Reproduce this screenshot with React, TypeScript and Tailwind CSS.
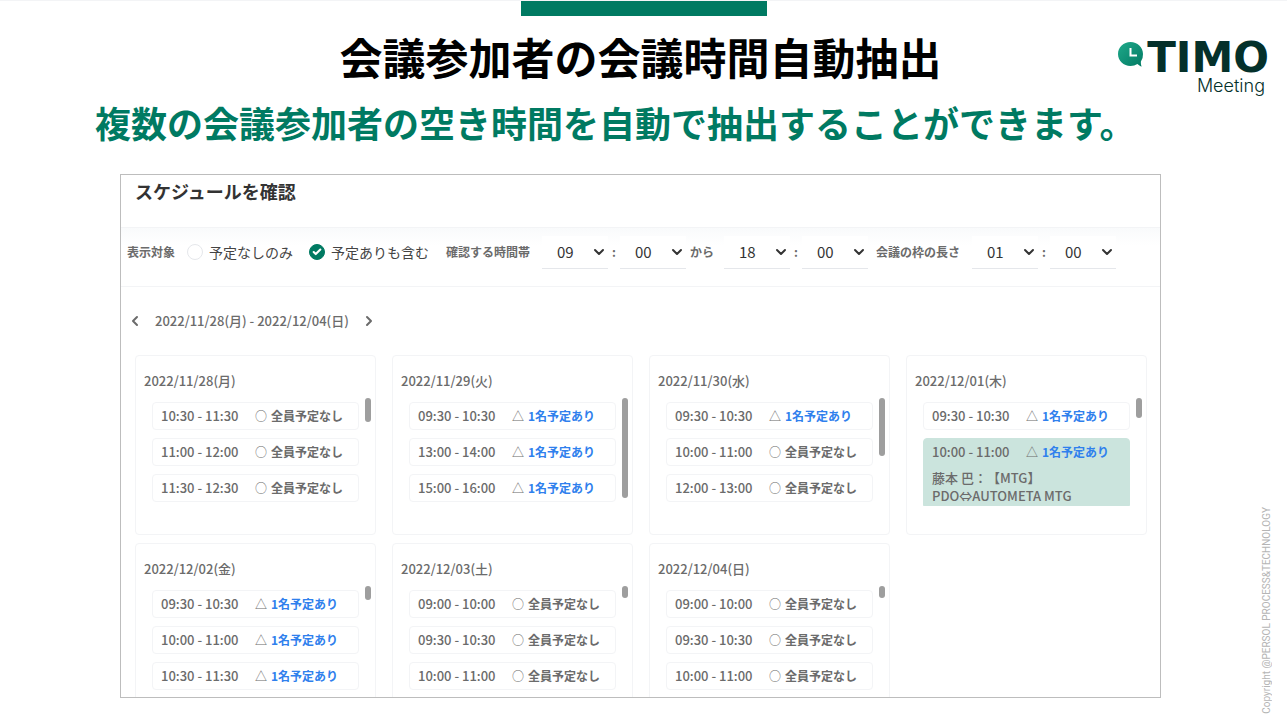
import { Check, ChevronDown, ChevronLeft, ChevronRight } from 'lucide-react';

type Slot = { time: string; busy: boolean; detail?: string[] };
type Day = { date: string; thumb: string; slots: Slot[] };

const DAYS: Day[] = [
  {
    date: '2022/11/28(月)',
    thumb: 'h-6',
    slots: [
      { time: '10:30 - 11:30', busy: false },
      { time: '11:00 - 12:00', busy: false },
      { time: '11:30 - 12:30', busy: false },
    ],
  },
  {
    date: '2022/11/29(火)',
    thumb: 'h-[100px]',
    slots: [
      { time: '09:30 - 10:30', busy: true },
      { time: '13:00 - 14:00', busy: true },
      { time: '15:00 - 16:00', busy: true },
    ],
  },
  {
    date: '2022/11/30(水)',
    thumb: 'h-[58px]',
    slots: [
      { time: '09:30 - 10:30', busy: true },
      { time: '10:00 - 11:00', busy: false },
      { time: '12:00 - 13:00', busy: false },
    ],
  },
  {
    date: '2022/12/01(木)',
    thumb: 'h-5',
    slots: [
      { time: '09:30 - 10:30', busy: true },
      {
        time: '10:00 - 11:00',
        busy: true,
        detail: ['藤本 巴：【MTG】', 'PDO⇔AUTOMETA MTG'],
      },
    ],
  },
  {
    date: '2022/12/02(金)',
    thumb: 'h-3.5',
    slots: [
      { time: '09:30 - 10:30', busy: true },
      { time: '10:00 - 11:00', busy: true },
      { time: '10:30 - 11:30', busy: true },
    ],
  },
  {
    date: '2022/12/03(土)',
    thumb: 'h-3',
    slots: [
      { time: '09:00 - 10:00', busy: false },
      { time: '09:30 - 10:30', busy: false },
      { time: '10:00 - 11:00', busy: false },
    ],
  },
  {
    date: '2022/12/04(日)',
    thumb: 'h-3',
    slots: [
      { time: '09:00 - 10:00', busy: false },
      { time: '09:30 - 10:30', busy: false },
      { time: '10:00 - 11:00', busy: false },
    ],
  },
];

const HOURS = ['01', '09', '18'];
const MINUTES = ['00', '30'];

function Logo() {
  return (
    <div className="flex flex-col items-end text-[#04302a]">
      <div className="flex items-center">
        <svg viewBox="0 0 28 28" className="mb-1.5 size-7" aria-hidden="true">
          <defs>
            <linearGradient id="bubble" x1="0" y1="0" x2="1" y2="1">
              <stop offset="0" stopColor="#1fa98a" />
              <stop offset="1" stopColor="#027a63" />
            </linearGradient>
          </defs>
          <path
            d="M13.5 1C6.6 1 1 6.300 1 13s5.600 12 12.500 12c2.600 0 4.900-.7 6.900-2 1.300 1.200 2.700 2.200 4.300 2.600-.7-1.600-.9-3.400-.8-5.200A11.700 11.700 0 0 0 26 13C26 6.300 20.400 1 13.500 1z"
            fill="url(#bubble)"
          />
          <path d="M13.500 7v7.500H20" fill="none" stroke="#fff" strokeWidth="2" />
        </svg>
        <span className="ml-0.5 font-['DejaVu_Sans',sans-serif] text-[42px] leading-9 font-bold">
          TIMO
        </span>
      </div>
      <span className="mr-1 font-[Inter] text-lg leading-5 font-light">Meeting</span>
    </div>
  );
}

function TimeSelect({ label, value, options }: { label: string; value: string; options: string[] }) {
  return (
    <div className="relative w-[66px] border-b border-gray-200 bg-white">
      <select
        aria-label={label}
        defaultValue={value}
        className="h-8 w-full appearance-none bg-transparent pl-[15px] text-[15px] font-normal text-[#333] outline-none"
      >
        {options.map((option) => (
          <option key={option}>{option}</option>
        ))}
      </select>
      <ChevronDown
        className="pointer-events-none absolute top-2 right-px size-4 text-[#333]"
        strokeWidth={3}
      />
    </div>
  );
}

function TimePair({ label, hour, minute }: { label: string; hour: string; minute: string }) {
  return (
    <div className="flex items-center">
      <TimeSelect label={`${label} 時`} value={hour} options={HOURS} />
      <span className="w-3 text-center">:</span>
      <TimeSelect label={`${label} 分`} value={minute} options={MINUTES} />
    </div>
  );
}

function Radio({ label, checked }: { label: string; checked?: boolean }) {
  return (
    <label className="flex items-center gap-1.5 text-sm font-normal text-[#444]">
      <span className="relative flex">
        <input
          type="radio"
          name="target"
          defaultChecked={checked}
          className="peer size-4 appearance-none rounded-full border border-gray-200 bg-white checked:border-[#007a62] checked:bg-[#007a62]"
        />
        <Check
          className="pointer-events-none absolute top-[3px] left-[3px] hidden size-2.5 text-white peer-checked:block"
          strokeWidth={5}
        />
      </span>
      {label}
    </label>
  );
}

function SlotRow({ slot }: { slot: Slot }) {
  return (
    <li
      className={
        slot.detail
          ? 'rounded-t border border-[#cbe4dd] bg-[#cbe4dd] px-2'
          : 'rounded border border-gray-100 bg-white px-2'
      }
    >
      <div className="flex h-[26px] items-center">
        <span className="w-[94px] text-[13px] font-medium">{slot.time}</span>
        <span className="w-4 font-normal">{slot.busy ? '△' : '○'}</span>
        {slot.busy ? (
          <a href="#detail" className="text-[#2f80ed]">
            1名予定あり
          </a>
        ) : (
          <span>全員予定なし</span>
        )}
      </div>
      {slot.detail && (
        <div className="pt-1 text-[13px] leading-[18px] font-medium [text-spacing-trim:space-all]">
          {slot.detail.map((line) => (
            <p key={line}>{line}</p>
          ))}
        </div>
      )}
    </li>
  );
}

function DayCard({ day }: { day: Day }) {
  return (
    <article className="relative h-[180px] rounded border border-gray-100 bg-white pt-[15px]">
      <h3 className="px-2 text-[13px] leading-5 font-medium">{day.date}</h3>
      <ul className="mt-[11px] h-[104px] space-y-2 overflow-hidden px-4">
        {day.slots.map((slot) => (
          <SlotRow key={slot.time} slot={slot} />
        ))}
      </ul>
      <div className={`absolute top-[42px] right-1 w-1.5 rounded-full bg-[#9e9e9e] ${day.thumb}`} />
    </article>
  );
}

export default function App() {
  return (
    <div className="flex h-screen flex-col overflow-hidden border-t border-gray-100 bg-white pb-[29px] font-['Noto_Sans_CJK_JP',sans-serif]">
      <div className="mx-auto h-[15px] w-[246px] shrink-0 bg-[#007a62]" />
      <header className="grid grid-cols-[1fr_auto_1fr] items-start pr-[18px] pl-3">
        <h1 className="col-start-2 text-[43px] leading-[80px] font-bold text-black">
          会議参加者の会議時間自動抽出
        </h1>
        <div className="justify-self-end pt-6">
          <Logo />
        </div>
      </header>
      <p className="pl-[95px] text-4xl leading-[52px] font-bold whitespace-nowrap text-[#007a62]">
        複数の会議参加者の空き時間を自動で抽出することができます。
      </p>

      <div className="mt-[26px] flex min-h-0 flex-1">
        <main className="ml-[120px] min-w-0 flex-1 overflow-hidden border border-[#bdbdbd] text-xs font-bold text-[#6b6b6b]">
          <h2 className="h-[52px] pt-1 pl-3.5 text-lg leading-6 text-[#333]">スケジュールを確認</h2>

          <form className="flex h-[60px] items-center border-y border-gray-100 bg-linear-to-b from-gray-50 to-white to-30% pb-2.5 pl-1.5 whitespace-nowrap">
            <span className="mr-3">表示対象</span>
            <Radio label="予定なしのみ" />
            <span className="w-4" />
            <Radio label="予定ありも含む" checked />
            <span className="mr-3 ml-[17px]">確認する時間帯</span>
            <TimePair label="開始" hour="09" minute="00" />
            <span className="w-[38px] pl-1">から</span>
            <TimePair label="終了" hour="18" minute="00" />
            <span className="mr-3 ml-2">会議の枠の長さ</span>
            <TimePair label="長さ" hour="01" minute="00" />
          </form>

          <nav className="flex h-[68px] items-center pl-1.5">
            <button type="button" aria-label="前の週">
              <ChevronLeft className="size-4" strokeWidth={3} />
            </button>
            <span className="mx-3 text-[13px] font-medium">2022/11/28(月) - 2022/12/04(日)</span>
            <button type="button" aria-label="次の週">
              <ChevronRight className="size-4" strokeWidth={3} />
            </button>
          </nav>

          <div className="grid grid-cols-4 gap-x-4 gap-y-2 pr-[13px] pl-3.5">
            {DAYS.map((day) => (
              <DayCard key={day.date} day={day} />
            ))}
          </div>
        </main>
        <aside className="flex w-[126px] shrink-0 items-end justify-end pr-3">
          <small className="-mb-4 rotate-180 font-[Roboto] text-[10px] leading-4 whitespace-nowrap text-[#b5b5b5] [writing-mode:vertical-rl]">
            Copyright @PERSOL PROCESS&amp;TECHNOLOGY
          </small>
        </aside>
      </div>
    </div>
  );
}
